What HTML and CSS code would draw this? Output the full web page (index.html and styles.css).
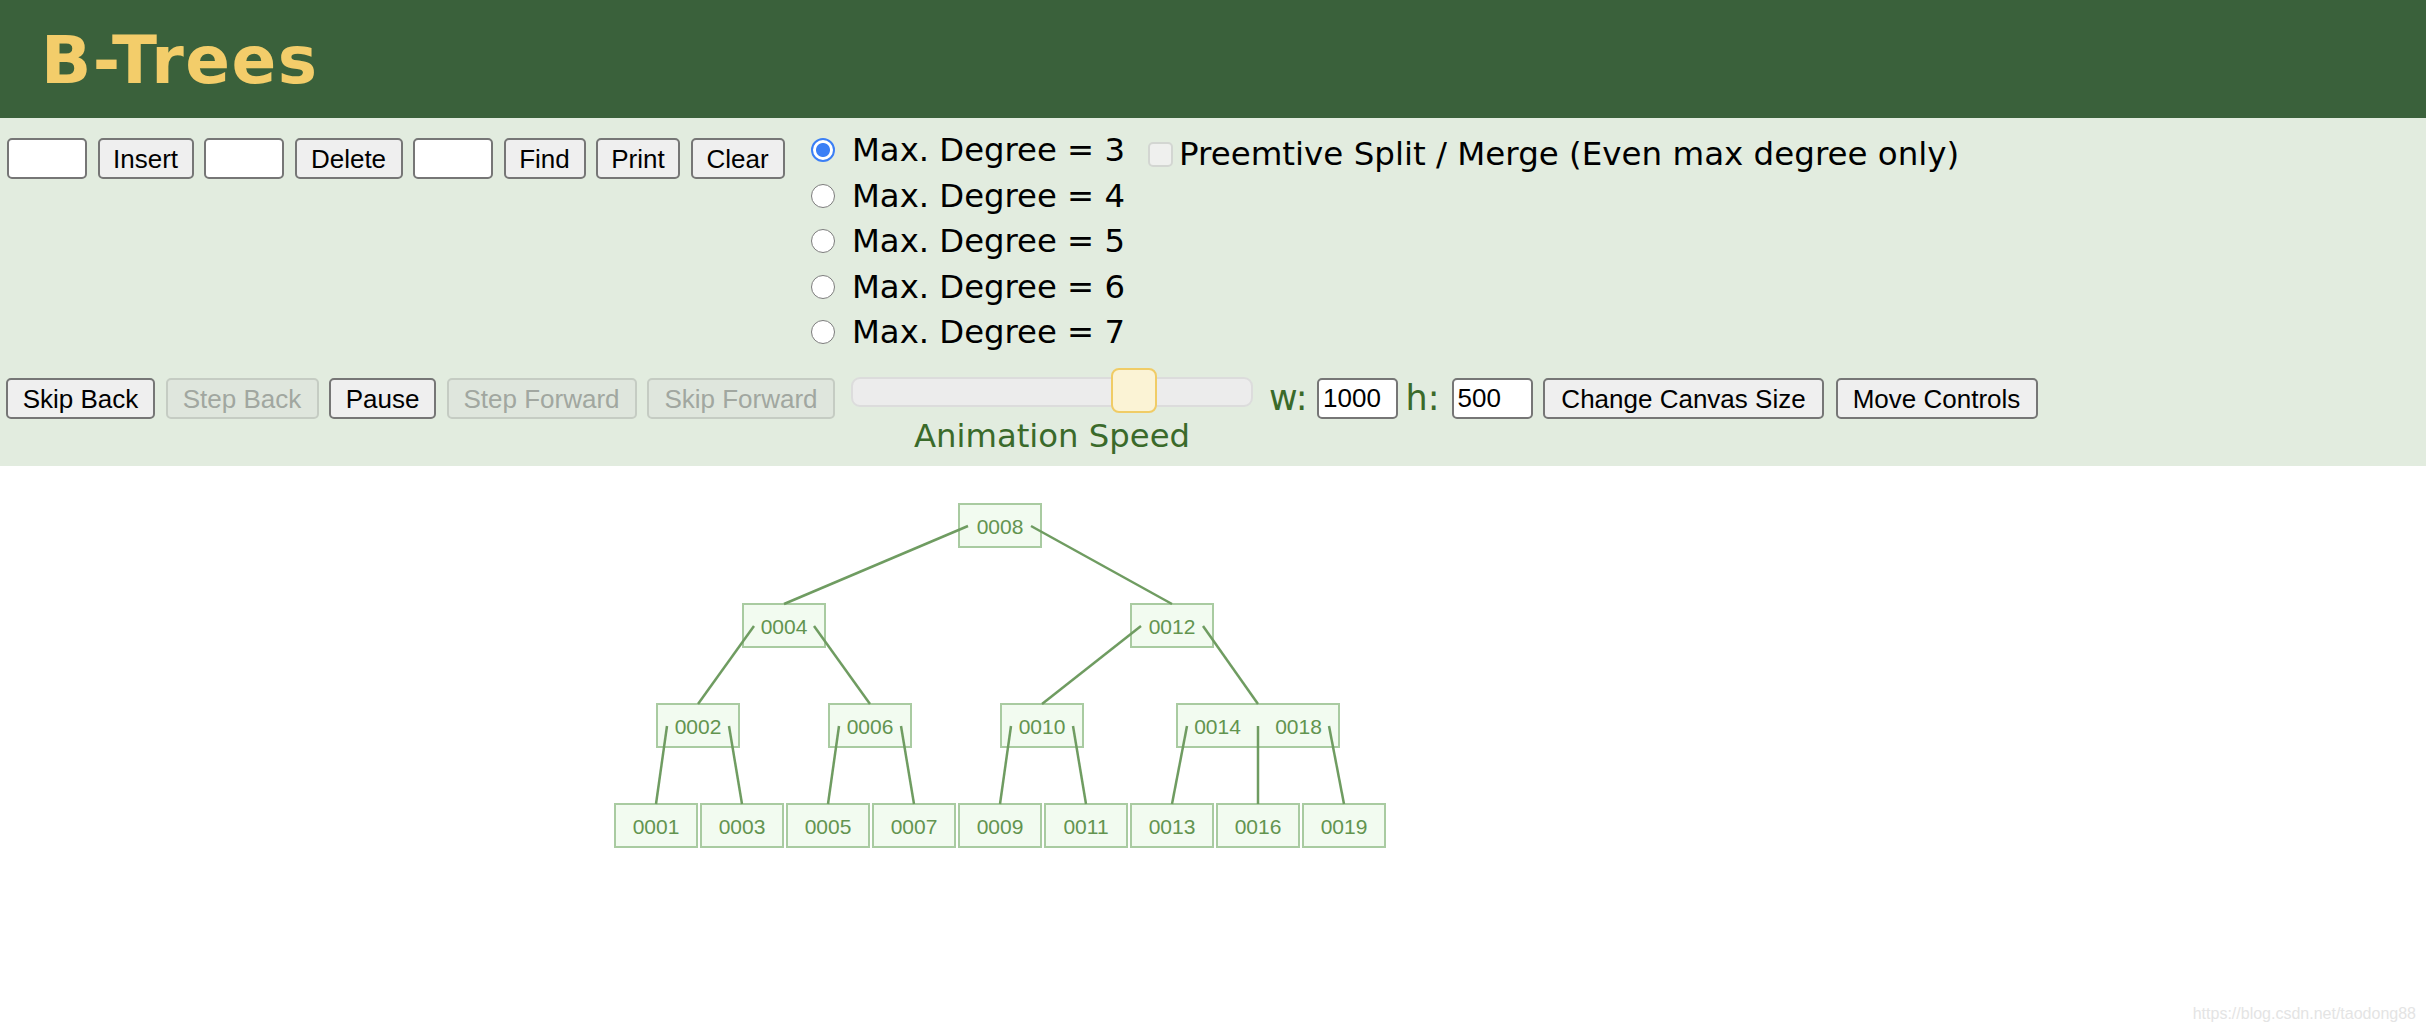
FILE: index.html
```html
<!DOCTYPE html>
<html>
<head>
<meta charset="utf-8">
<title>B-Trees</title>
<link rel="stylesheet" href="styles.css">
</head>
<body>
<header class="header"><h1 class="title">B-Trees</h1></header>
<div class="panel">
  <div class="row1">
    <div class="ops">
      <input class="field" type="text">
      <button class="btn w-insert">Insert</button>
      <input class="field" type="text">
      <button class="btn w-delete">Delete</button>
      <input class="field" type="text">
      <button class="btn w-find">Find</button>
      <button class="btn w-print">Print</button>
      <button class="btn w-clear">Clear</button>
    </div>
    <div class="degrees">
      <label class="deg"><input type="radio" name="deg" checked>Max. Degree = 3</label>
      <label class="deg"><input type="radio" name="deg">Max. Degree = 4</label>
      <label class="deg"><input type="radio" name="deg">Max. Degree = 5</label>
      <label class="deg"><input type="radio" name="deg">Max. Degree = 6</label>
      <label class="deg"><input type="radio" name="deg">Max. Degree = 7</label>
    </div>
    <label class="preempt"><input type="checkbox" disabled>Preemtive Split / Merge (Even max degree only)</label>
  </div>
  <div class="row2">
    <div class="anim">
      <button class="btn w-skipback">Skip Back</button>
      <button class="btn w-stepback" disabled>Step Back</button>
      <button class="btn w-pause">Pause</button>
      <button class="btn w-stepfwd" disabled>Step Forward</button>
      <button class="btn w-skipfwd" disabled>Skip Forward</button>
    </div>
    <div class="speed">
      <div class="slider"><div class="track"></div><div class="thumb"></div></div>
      <div class="speed-label">Animation Speed</div>
    </div>
    <div class="size">
      <span class="lbl lbl-w">w:</span>
      <input class="field num num-w" type="text" value="1000">
      <span class="lbl lbl-h">h:</span>
      <input class="field num num-h" type="text" value="500">
      <button class="btn w-change">Change Canvas Size</button>
      <button class="btn w-move">Move Controls</button>
    </div>
  </div>
</div>
<svg class="canvas" width="1400" height="568" viewBox="0 466 1400 568" xmlns="http://www.w3.org/2000/svg">
  <g class="nodes">
    <rect x="959" y="504" width="82" height="43"/>
    <rect x="743" y="604" width="82" height="43"/>
    <rect x="1131" y="604" width="82" height="43"/>
    <rect x="657" y="704" width="82" height="43"/>
    <rect x="829" y="704" width="82" height="43"/>
    <rect x="1001" y="704" width="82" height="43"/>
    <rect x="1177" y="704" width="162" height="43"/>
    <rect x="615" y="804" width="82" height="43"/>
    <rect x="701" y="804" width="82" height="43"/>
    <rect x="787" y="804" width="82" height="43"/>
    <rect x="873" y="804" width="82" height="43"/>
    <rect x="959" y="804" width="82" height="43"/>
    <rect x="1045" y="804" width="82" height="43"/>
    <rect x="1131" y="804" width="82" height="43"/>
    <rect x="1217" y="804" width="82" height="43"/>
    <rect x="1303" y="804" width="82" height="43"/>
  </g>
  <g class="edges">
    <line x1="968" y1="526" x2="784" y2="604"/>
    <line x1="1031" y1="526" x2="1172" y2="604"/>
    <line x1="754" y1="626" x2="698" y2="704"/>
    <line x1="814" y1="626" x2="870" y2="704"/>
    <line x1="1141" y1="626" x2="1042" y2="704"/>
    <line x1="1203" y1="626" x2="1258" y2="704"/>
    <line x1="667" y1="726" x2="656" y2="804"/>
    <line x1="729" y1="726" x2="742" y2="804"/>
    <line x1="839" y1="726" x2="828" y2="804"/>
    <line x1="901" y1="726" x2="914" y2="804"/>
    <line x1="1011" y1="726" x2="1000" y2="804"/>
    <line x1="1073" y1="726" x2="1086" y2="804"/>
    <line x1="1187" y1="726" x2="1172" y2="804"/>
    <line x1="1258" y1="726" x2="1258" y2="804"/>
    <line x1="1329" y1="726" x2="1344" y2="804"/>
  </g>
  <g class="keys">
    <text x="1000" y="534">0008</text>
    <text x="784" y="634">0004</text>
    <text x="1172" y="634">0012</text>
    <text x="698" y="734">0002</text>
    <text x="870" y="734">0006</text>
    <text x="1042" y="734">0010</text>
    <text x="1217.5" y="734">0014</text>
    <text x="1298.5" y="734">0018</text>
    <text x="656" y="834">0001</text>
    <text x="742" y="834">0003</text>
    <text x="828" y="834">0005</text>
    <text x="914" y="834">0007</text>
    <text x="1000" y="834">0009</text>
    <text x="1086" y="834">0011</text>
    <text x="1172" y="834">0013</text>
    <text x="1258" y="834">0016</text>
    <text x="1344" y="834">0019</text>
  </g>
</svg>
<div class="watermark">https://blog.csdn.net/taodong88</div>
</body>
</html>
```

FILE: styles.css
```css
html, body {
  margin: 0;
  padding: 0;
}
body {
  position: relative;
  width: 2426px;
  height: 1034px;
  overflow: hidden;
  background: #ffffff;
  font-family: "DejaVu Sans", Verdana, sans-serif;
}
.header {
  height: 118px;
  box-sizing: border-box;
  padding: 28px 0 0 41px;
  background: #3a613b;
}
.title {
  margin: 0;
  font: bold 66px/66px "DejaVu Sans", Verdana, sans-serif;
  letter-spacing: 1.5px;
  color: #f3cd6a;
}
.panel {
  height: 348px;
  box-sizing: border-box;
  padding: 9.5px 0 0 7px;
  background: #e2ecdf;
}
.row1, .row2 {
  display: flex;
  align-items: flex-start;
}
.ops {
  display: flex;
  gap: 10.5px;
  margin-top: 10.5px;
}
.field {
  width: 80px;
  height: 41px;
  box-sizing: border-box;
  margin: 0;
  padding: 0 5px;
  border: 2px solid #767676;
  border-radius: 5px;
  background: #ffffff;
  font: 26px "Liberation Sans", Arial, sans-serif;
  color: #000;
}
.btn {
  height: 41px;
  box-sizing: border-box;
  margin: 0;
  padding: 0;
  border: 2px solid #767676;
  border-radius: 5px;
  background: #efefef;
  font: 26px/1 "Liberation Sans", Arial, sans-serif;
  color: #000;
  text-align: center;
  white-space: nowrap;
}
.btn:disabled {
  background: #dfe6dd;
  border-color: #c5ccc3;
  color: #a1a7a0;
}
.w-insert { width: 96px; }
.w-delete { width: 108px; }
.w-find { width: 82px; }
.w-print { width: 84px; }
.w-clear { width: 94px; }
.w-skipback { width: 149px; }
.w-stepback { width: 153px; }
.w-pause { width: 107px; }
.w-stepfwd { width: 190px; }
.w-skipfwd { width: 188px; }
.w-change { width: 281px; }
.w-move { width: 202px; }
.degrees {
  display: flex;
  flex-direction: column;
  margin-left: 26.5px;
}
.deg, .preempt {
  display: flex;
  align-items: center;
  height: 45.5px;
  font-size: 32.3px;
  color: #000;
  white-space: nowrap;
}
.deg input {
  appearance: none;
  -webkit-appearance: none;
  flex: none;
  width: 24px;
  height: 24px;
  margin: 0 17px 0 0;
  box-sizing: border-box;
  border: 1.5px solid #7c7c7c;
  border-radius: 50%;
  background: #ffffff;
}
.deg input:checked {
  border: 2px solid #3b7ff5;
  background: radial-gradient(circle, #3b7ff5 0 6.5px, #ffffff 7.5px);
}
.preempt {
  margin-left: 23px;
  margin-top: 4px;
  font-size: 32.5px;
}
.preempt input {
  appearance: none;
  -webkit-appearance: none;
  flex: none;
  width: 25px;
  height: 25px;
  margin: 0 6px 0 0;
  box-sizing: border-box;
  border: 2px solid #d3d6d2;
  border-radius: 5px;
  background: #eff0ee;
}
.anim {
  display: flex;
  gap: 10.5px;
  margin-top: 23px;
  margin-left: -1px;
}
.speed {
  margin-left: 16px;
  margin-top: 13px;
}
.slider {
  position: relative;
  width: 402px;
  height: 45px;
  box-sizing: border-box;
  padding-top: 9px;
}
.track {
  height: 30px;
  box-sizing: border-box;
  border: 2px solid #dcdcdc;
  border-radius: 9px;
  background: #ececec;
}
.thumb {
  position: absolute;
  left: 260px;
  top: 0;
  width: 46px;
  height: 45px;
  box-sizing: border-box;
  border: 2px solid #f0cc66;
  border-radius: 8px;
  background: #fbf3d5;
}
.speed-label {
  margin-top: 5px;
  text-align: center;
  font-size: 32.3px;
  line-height: 37px;
  color: #3a6a2a;
  white-space: nowrap;
}
.size {
  display: flex;
  align-items: center;
  height: 41px;
  margin-top: 23px;
  margin-left: 16px;
}
.lbl {
  font-size: 35px;
  line-height: 41px;
  color: #3a6a2a;
}
.lbl-w { margin-right: 9.5px; }
.lbl-h { margin-right: 12px; }
.num { width: 81px; padding: 0 4px; }
.num-w { margin-right: 7.5px; }
.num-h { margin-right: 10.5px; }
.w-change { margin-right: 11.5px; }
.canvas {
  display: block;
}
.nodes rect {
  fill: #f2fbf0;
  stroke: #a9cba1;
  stroke-width: 2;
}
.edges line {
  stroke: #6f9c61;
  stroke-width: 2.5;
}
.keys text {
  fill: #62944f;
  font-family: "Liberation Sans", Arial, sans-serif;
  font-size: 21px;
  text-anchor: middle;
}
.watermark {
  position: absolute;
  right: 10px;
  bottom: 11px;
  font: 16px "Liberation Sans", Arial, sans-serif;
  color: #e4e4e4;
}
```
